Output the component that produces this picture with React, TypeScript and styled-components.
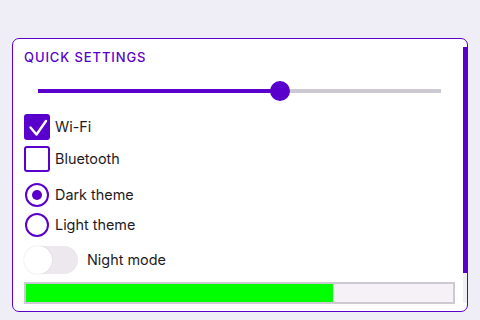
import React from "react";
import styled, { createGlobalStyle } from "styled-components";

const purple = "#5a00cc";

const Global = createGlobalStyle`
  html, body { margin: 0; padding: 0; background: #efeef7; }
  body { font-family: Inter, "Noto Sans", sans-serif; color: #1f1b24; }
  * { box-sizing: border-box; }
`;

const Page = styled.div`
  padding: 38px 12px 8px;
`;

const Card = styled.section`
  position: relative;
  height: 274px;
  background: #ffffff;
  border: 1px solid ${purple};
  border-radius: 7px;
  overflow: hidden;
  padding: 8px 12px 0 11px;
`;

const ScrollTrack = styled.div`
  position: absolute;
  right: 0;
  top: 8px;
  bottom: 8px;
  width: 4px;
  background: #f1eef4;
`;

const ScrollThumb = styled.div`
  width: 100%;
  background: ${purple};
`;

const Title = styled.h2`
  margin: 0;
  font-size: 13px;
  line-height: 20px;
  font-weight: 500;
  letter-spacing: 0.9px;
  color: ${purple};
`;

const SliderWrap = styled.div`
  margin: 14px 14px 0;
  height: 20px;
  display: flex;
  align-items: center;
`;

const Track = styled.div`
  flex: 1;
  height: 4px;
  background: #ccc9d5;
  position: relative;
`;

const Fill = styled.div`
  position: absolute;
  left: 0;
  top: 0;
  bottom: 0;
  background: ${purple};
`;

const Thumb = styled.div`
  position: absolute;
  top: 50%;
  width: 20px;
  height: 20px;
  margin: -10px 0 0 -10px;
  border-radius: 50%;
  background: ${purple};
`;

const Row = styled.label<{ $mt: number; $gap?: number }>`
  display: flex;
  align-items: center;
  gap: ${(p) => p.$gap ?? 5}px;
  margin-top: ${(p) => p.$mt}px;
  font-size: 14.4px;
  line-height: 18px;
`;

const Box = styled.span<{ $on?: boolean }>`
  width: 26px;
  height: 26px;
  border-radius: 3px;
  border: 2px solid ${purple};
  background: ${(p) => (p.$on ? purple : "#fff")};
  display: flex;
  align-items: center;
  justify-content: center;
  flex-shrink: 0;
`;

const Radio = styled.span<{ $on?: boolean }>`
  width: 24px;
  height: 24px;
  margin-left: 1px;
  margin-right: 1px;
  border-radius: 50%;
  border: 2px solid ${purple};
  display: flex;
  align-items: center;
  justify-content: center;
  flex-shrink: 0;
  &::after {
    content: "";
    display: ${(p) => (p.$on ? "block" : "none")};
    width: 10px;
    height: 10px;
    border-radius: 50%;
    background: ${purple};
  }
`;

const Switch = styled.span`
  width: 54px;
  height: 28px;
  border-radius: 14px;
  background: #ece8ee;
  display: flex;
  align-items: center;
  flex-shrink: 0;
`;

const Knob = styled.span`
  width: 28px;
  height: 28px;
  border-radius: 50%;
  background: #fff;
  box-shadow: 0 0 2px rgba(0, 0, 0, 0.12);
`;

const Progress = styled.div`
  margin-top: 8px;
  height: 22px;
  border: 2px solid #ccc9d3;
  background: #f6f1f7;
`;

const ProgressFill = styled.div`
  height: 100%;
  background: #00ff00;
`;

export default function App() {
  const value = 60;
  const progress = 72;
  return (
    <>
      <Global />
      <Page>
        <Card>
          <Title>QUICK SETTINGS</Title>
          <SliderWrap>
            <Track>
              <Fill style={{ width: `${value}%` }} />
              <Thumb style={{ left: `${value}%` }} />
            </Track>
          </SliderWrap>
          <Row $mt={13}>
            <Box $on>
              <svg width="26" height="26" viewBox="0 0 26 26" style={{ margin: -2 }}>
                <path d="M6.5 13.5 L12.5 20.5 L22 7" fill="none" stroke="#fff" strokeWidth="2.4" strokeLinecap="round" strokeLinejoin="round" />
              </svg>
            </Box>
            Wi-Fi
          </Row>
          <Row $mt={6}>
            <Box />
            Bluetooth
          </Row>
          <Row $mt={11}>
            <Radio $on />
            Dark theme
          </Row>
          <Row $mt={6}>
            <Radio />
            Light theme
          </Row>
          <Row $mt={9} $gap={9}>
            <Switch>
              <Knob />
            </Switch>
            Night mode
          </Row>
          <Progress>
            <ProgressFill style={{ width: `${progress}%` }} />
          </Progress>
          <ScrollTrack>
            <ScrollThumb style={{ height: `${(226 / 256) * 100}%` }} />
          </ScrollTrack>
        </Card>
      </Page>
    </>
  );
}
